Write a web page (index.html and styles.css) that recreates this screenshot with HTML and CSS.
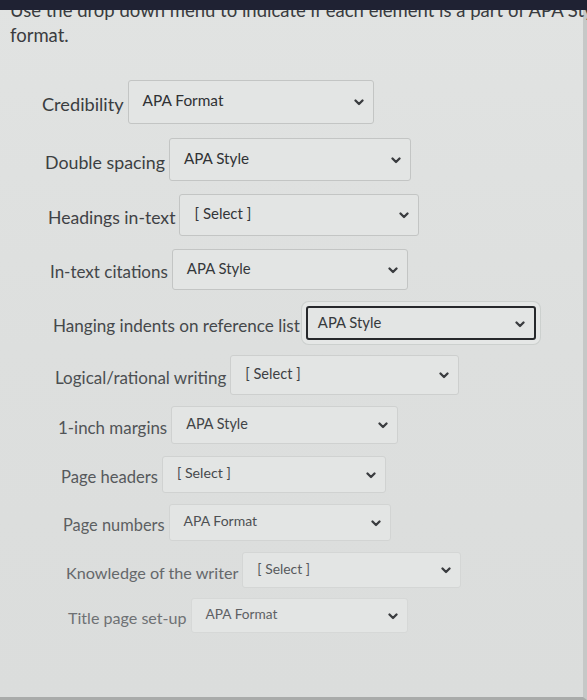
FILE: index.html
```html
<!DOCTYPE html>
<html lang="en">
<head>
<meta charset="utf-8">
<title>APA Style matching</title>
<link rel="stylesheet" href="styles.css">
</head>
<body>
<div class="page">
  <div class="topbar"></div>
  <p class="prompt"><span class="line">Use the drop down menu to indicate if each element is a part of APA Style</span><br>format.</p>
  <div class="rows">
    <div class="row"><span class="label">Credibility</span><div class="select"><span class="value">APA Format</span><svg class="chev" viewBox="0 0 10 7"><polyline points="1.5,1.5 5,5 8.5,1.5"/></svg></div></div>
    <div class="row"><span class="label">Double spacing</span><div class="select"><span class="value">APA Style</span><svg class="chev" viewBox="0 0 10 7"><polyline points="1.5,1.5 5,5 8.5,1.5"/></svg></div></div>
    <div class="row"><span class="label">Headings in-text</span><div class="select"><span class="value">[ Select ]</span><svg class="chev" viewBox="0 0 10 7"><polyline points="1.5,1.5 5,5 8.5,1.5"/></svg></div></div>
    <div class="row"><span class="label">In-text citations</span><div class="select"><span class="value">APA Style</span><svg class="chev" viewBox="0 0 10 7"><polyline points="1.5,1.5 5,5 8.5,1.5"/></svg></div></div>
    <div class="row"><span class="label">Hanging indents on reference list</span><div class="select focused"><span class="value">APA Style</span><svg class="chev" viewBox="0 0 10 7"><polyline points="1.5,1.5 5,5 8.5,1.5"/></svg></div></div>
    <div class="row"><span class="label">Logical/rational writing</span><div class="select"><span class="value">[ Select ]</span><svg class="chev" viewBox="0 0 10 7"><polyline points="1.5,1.5 5,5 8.5,1.5"/></svg></div></div>
    <div class="row"><span class="label">1-inch margins</span><div class="select"><span class="value">APA Style</span><svg class="chev" viewBox="0 0 10 7"><polyline points="1.5,1.5 5,5 8.5,1.5"/></svg></div></div>
    <div class="row"><span class="label">Page headers</span><div class="select"><span class="value">[ Select ]</span><svg class="chev" viewBox="0 0 10 7"><polyline points="1.5,1.5 5,5 8.5,1.5"/></svg></div></div>
    <div class="row"><span class="label">Page numbers</span><div class="select"><span class="value">APA Format</span><svg class="chev" viewBox="0 0 10 7"><polyline points="1.5,1.5 5,5 8.5,1.5"/></svg></div></div>
    <div class="row"><span class="label">Knowledge of the writer</span><div class="select"><span class="value">[ Select ]</span><svg class="chev" viewBox="0 0 10 7"><polyline points="1.5,1.5 5,5 8.5,1.5"/></svg></div></div>
    <div class="row"><span class="label">Title page set-up</span><div class="select"><span class="value">APA Format</span><svg class="chev" viewBox="0 0 10 7"><polyline points="1.5,1.5 5,5 8.5,1.5"/></svg></div></div>
  </div>
</div>
</body>
</html>
```
FILE: styles.css
```css
html, body {
  margin: 0;
  padding: 0;
  height: 100%;
}
body {
  font-family: Lato, "Open Sans", "Liberation Sans", sans-serif;
  background: #dddfde;
  overflow: hidden;
}
.page {
  position: relative;
  display: flow-root;
  height: 700px;
  box-sizing: border-box;
  background: linear-gradient(180deg, #e1e3e2 0%, #dddfde 50%, #dbdddc 100%);
  border-right: 4px solid #c6c8c7;
  border-bottom: 3px solid #a9abaa;
}
.topbar {
  position: absolute;
  top: 0;
  left: 0;
  right: -4px;
  height: 10px;
  background: #1f2233;
  z-index: 2;
}
.prompt {
  margin: -2px 0 0;
  padding-left: 10px;
  font-size: 18.5px;
  line-height: 25px;
  color: #3a3c40;
  white-space: nowrap;
}
.rows {
  display: flex;
  flex-direction: column;
  padding-left: 42px;
}
.row {
  display: flex;
  align-items: center;
  gap: 4px;
}
.label {
  font-size: 17.5px;
  padding-top: 4px;
  white-space: nowrap;
}
.select {
  position: relative;
  display: flex;
  align-items: center;
  justify-content: space-between;
  box-sizing: border-box;
  border: 1px solid #c3c5c4;
  border-radius: 3px;
  background: #e3e5e4;
  padding: 0 9px 4px 14px;
}
.value {
  white-space: nowrap;
}
.chev {
  width: 10px;
  height: 7px;
  fill: none;
  stroke: #3a3c3f;
  stroke-width: 2.3;
  stroke-linecap: round;
  stroke-linejoin: round;
  margin-top: 5px;
}
.select.focused {
  border: 2px solid #26282b;
  box-shadow: 0 0 0 4px #e5e7e6, 0 0 0 5px #ccd0ce;
}

/* per-row sizing (photo perspective) */
.row:nth-child(1) { margin-top: 32px; margin-left: 0; }
.row:nth-child(1) .label { font-size: 18.2px; color: #3a3d40; }
.row:nth-child(1) .select { width: 246px; height: 44px; font-size: 15.4px; color: #2f3134; }

.row:nth-child(2) { margin-top: 14px; margin-left: 3px; }
.row:nth-child(2) .label { font-size: 17.8px; color: #3c3f42; }
.row:nth-child(2) .select { width: 242px; height: 43px; font-size: 15.2px; color: #303235; }

.row:nth-child(3) { margin-top: 13px; margin-left: 6px; }
.row:nth-child(3) .label { font-size: 17.6px; color: #3f4245; }
.row:nth-child(3) .select { width: 240px; height: 42px; font-size: 15px; color: #333538; }

.row:nth-child(4) { margin-top: 13px; margin-left: 8px; }
.row:nth-child(4) .label { font-size: 17px; color: #434649; }
.row:nth-child(4) .select { width: 236px; height: 41px; font-size: 14.9px; color: #35383b; }

.row:nth-child(5) { margin-top: 16px; margin-left: 11px; gap: 6px; }
.row:nth-child(5) .label { font-size: 17.1px; color: #45484b; }
.row:nth-child(5) .select { width: 230px; height: 34px; font-size: 14.8px; color: #36393c; padding-bottom: 2px; padding-left: 10px; }

.row:nth-child(6) { margin-top: 15px; margin-left: 13px; }
.row:nth-child(6) .label { font-size: 17px; color: #4c4f52; }
.row:nth-child(6) .select { width: 229px; height: 40px; font-size: 14.6px; color: #3d4043; border-color: #cdcfce; }

.row:nth-child(7) { margin-top: 11px; margin-left: 16px; }
.row:nth-child(7) .label { font-size: 16.9px; color: #515457; }
.row:nth-child(7) .select { width: 227px; height: 38px; font-size: 14.4px; color: #414447; border-color: #cfd1d0; }

.row:nth-child(8) { margin-top: 12px; margin-left: 19px; }
.row:nth-child(8) .label { font-size: 16.6px; color: #56595c; }
.row:nth-child(8) .select { width: 224px; height: 37px; font-size: 14.2px; color: #46494c; border-color: #d0d2d1; }

.row:nth-child(9) { margin-top: 11px; margin-left: 21px; }
.row:nth-child(9) .label { font-size: 16.4px; color: #5c5f62; }
.row:nth-child(9) .select { width: 222px; height: 37px; font-size: 14px; color: #4d5053; border-color: #d2d4d3; }

.row:nth-child(10) { margin-top: 11px; margin-left: 24px; }
.row:nth-child(10) .label { font-size: 16.2px; color: #65686b; }
.row:nth-child(10) .select { width: 219px; height: 36px; font-size: 13.9px; color: #56595c; border-color: #d4d6d5; }

.row:nth-child(11) { margin-top: 10px; margin-left: 26px; }
.row:nth-child(11) .label { font-size: 16.1px; color: #6e7174; }
.row:nth-child(11) .select { width: 217px; height: 35px; font-size: 13.7px; color: #5e6164; border-color: #d6d8d7; }
```
